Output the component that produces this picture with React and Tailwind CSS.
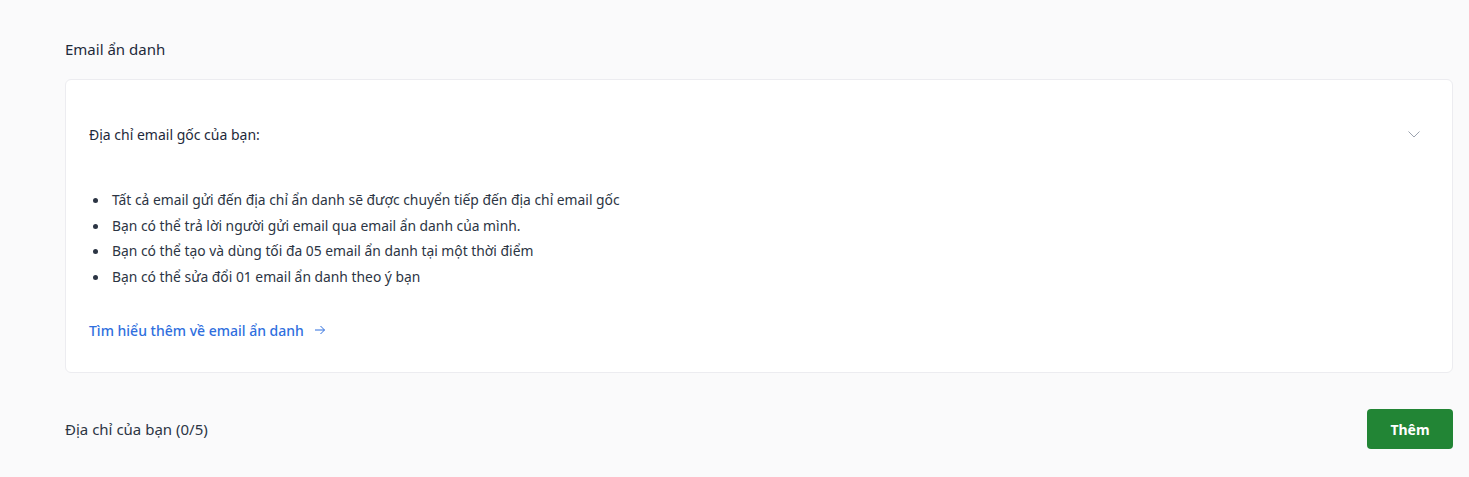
import React from 'react';

const items = [
  'Tất cả email gửi đến địa chỉ ẩn danh sẽ được chuyển tiếp đến địa chỉ email gốc',
  'Bạn có thể trả lời người gửi email qua email ẩn danh của mình.',
  'Bạn có thể tạo và dùng tối đa 05 email ẩn danh tại một thời điểm',
  'Bạn có thể sửa đổi 01 email ẩn danh theo ý bạn',
];

export default function App() {
  return (
    <div className="min-h-[477px] bg-[#fafafb] pl-[65px] pr-[16px] pt-[39px] font-['Noto_Sans','Liberation_Sans',sans-serif] text-[#1e2a3b]">
      <h2 className="text-[15px] leading-5">Email ẩn danh</h2>

      <div className="mt-5 rounded-md border border-[#ececf0] bg-white px-[23px] pt-[23px] pb-[30px]">
        <div className="flex h-[62px] items-center justify-between">
          <span className="text-[14px]">Địa chỉ email gốc của bạn:</span>
          <svg className="mr-[8px] h-[14px] w-[14px] text-[#9ca3af]" viewBox="0 0 14 14" fill="none">
            <path d="M1.5 4.5 7 10l5.5-5.5" stroke="currentColor" strokeWidth="1" />
          </svg>
        </div>

        <ul className="mt-[23px] pl-[4px]">
          {items.map((t) => (
            <li key={t} className="flex h-[25.5px] items-center text-[13.85px] text-[#2c3544]">
              <span className="mr-[14px] h-[5px] w-[5px] rounded-full bg-[#2c3544]" />
              {t}
            </li>
          ))}
        </ul>

        <a href="#" className="mt-[28px] flex h-6 items-center gap-[10px] text-[14px] font-medium text-[#2f6fde]">
          Tìm hiểu thêm về email ẩn danh
          <svg className="h-[12px] w-[12px]" viewBox="0 0 12 12" fill="none">
            <path d="M1 6h9.5M6.5 2l4 4-4 4" stroke="currentColor" strokeWidth="1" />
          </svg>
        </a>
      </div>

      <div className="mt-[36px] flex items-center justify-between">
        <span className="text-[15px] text-[#2c3544]">Địa chỉ của bạn (0/5)</span>
        <button className="h-10 w-[86px] rounded-[4px] bg-[#228535] text-[14px] font-bold text-white">
          Thêm
        </button>
      </div>
    </div>
  );
}
